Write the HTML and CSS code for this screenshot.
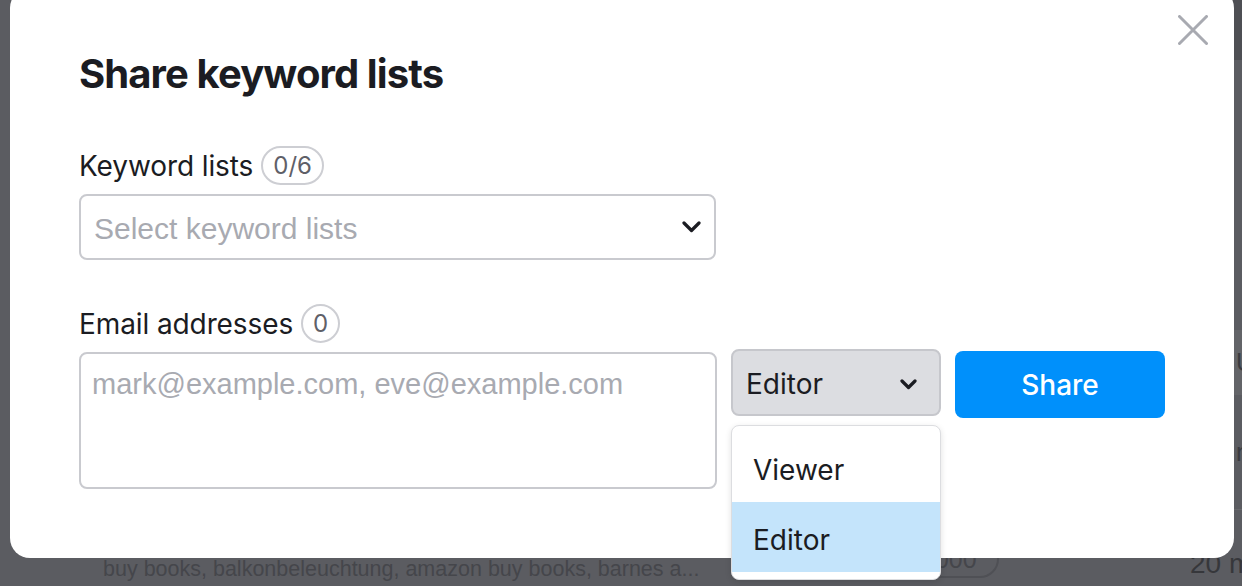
FILE: index.html
```html
<!DOCTYPE html>
<html lang="en">
<head>
<meta charset="utf-8">
<title>Share keyword lists</title>
<link rel="stylesheet" href="styles.css">
</head>
<body>
<div class="page">
  <div class="page-top"></div>
  <div class="page-gap"></div>
  <div class="page-head"><span class="edge-text">Up</span></div>
  <div class="page-row"><span class="edge-text">n</span></div>
  <div class="page-last">
    <span class="bg-keywords">buy books, balkonbeleuchtung, amazon buy books, barnes a...</span>
    <span class="bg-pill">11,000</span>
    <span class="bg-time">20 m</span>
  </div>
</div>

<div class="modal">
  <button class="close" aria-label="Close">
    <svg width="30" height="30" viewBox="0 0 30 30"><path d="M1.5 1.5 L28.5 28.5 M28.5 1.5 L1.5 28.5" stroke="#a8aab1" stroke-width="3" stroke-linecap="round" fill="none"/></svg>
  </button>
  <h1 class="title">Share keyword lists</h1>

  <div class="label-row">
    <span class="label">Keyword lists</span>
    <span class="count">0/6</span>
  </div>
  <div class="select">
    <span class="placeholder placeholder-select">Select keyword lists</span>
    <svg class="chevron" width="19" height="12" viewBox="0 0 19 12"><path d="M2 2 L9.5 9.5 L17 2" stroke="#1b1c22" stroke-width="3.2" fill="none" stroke-linecap="round" stroke-linejoin="round"/></svg>
  </div>

  <div class="label-row label-row-email">
    <span class="label">Email addresses</span>
    <span class="count">0</span>
  </div>
  <div class="email-row">
    <div class="textarea"><span class="placeholder">mark@example.com, eve@example.com</span></div>
    <div class="role">
      <div class="role-select">
        <span>Editor</span>
        <svg class="chevron" width="17" height="11" viewBox="0 0 17 11"><path d="M2 2 L8.5 8.5 L15 2" stroke="#1b1c22" stroke-width="3.2" fill="none" stroke-linecap="round" stroke-linejoin="round"/></svg>
      </div>
      <ul class="menu">
        <li>Viewer</li>
        <li class="active">Editor</li>
      </ul>
    </div>
    <button class="share">Share</button>
  </div>
</div>
</body>
</html>
```

FILE: styles.css
```css
* { box-sizing: border-box; }

body {
  margin: 0;
  width: 1242px;
  height: 586px;
  overflow: hidden;
  position: relative;
  background: #5b5c61;
  font-family: Inter, "Noto Sans", sans-serif;
  color: #1b1c22;
}

/* dimmed page behind the modal */
.page {
  display: flex;
  flex-direction: column;
  height: 586px;
}
.page-top {
  height: 60px;
  background: linear-gradient(to right, #5b5c61 1200px, #4e4f54 1200px);
}
.page-gap { height: 270px; }
.page-head {
  height: 65px;
  background: linear-gradient(to right, #5b5c61 1200px, #636468 1200px);
  display: flex;
  align-items: center;
}
.page-row {
  height: 115px;
  display: flex;
  align-items: center;
  background: linear-gradient(to top, #67686c 1px, transparent 1px) no-repeat right bottom / 42px 100%;
}
.edge-text {
  margin-left: 1236px;
  font-family: "Liberation Sans", sans-serif;
  font-size: 25px;
  color: #3a3b40;
}
.page-last {
  flex: 1;
  display: flex;
  align-items: flex-end;
  padding: 0 0 2px 103px;
  font-family: "Liberation Sans", sans-serif;
  color: #45464b;
}
.bg-keywords {
  width: 777px;
  font-size: 21.5px;
  line-height: 30px;
  white-space: nowrap;
}
.bg-pill {
  margin-bottom: 6px;
  height: 38px;
  padding: 0 20px;
  border: 2px solid #4f5055;
  border-radius: 19px;
  font-size: 25px;
  line-height: 34px;
  color: #45464b;
}
.bg-time {
  margin-left: auto;
  width: 52px;
  margin-bottom: 4px;
  font-size: 28px;
  color: #36373b;
  white-space: nowrap;
  overflow: hidden;
}

/* modal */
.modal {
  position: absolute;
  left: 10px;
  top: -12px;
  width: 1224px;
  height: 570px;
  padding: 62px 0 0 69px;
  background: #fff;
  border-radius: 20px;
}
.close {
  position: absolute;
  top: 27px;
  right: 26px;
  width: 30px;
  height: 30px;
  padding: 0;
  border: 0;
  background: none;
  display: flex;
}
.title {
  margin: 0;
  font-size: 40px;
  line-height: 48px;
  font-weight: 700;
  letter-spacing: -0.9px;
}
.label-row {
  margin-top: 48px;
  height: 39px;
  display: flex;
  align-items: center;
  gap: 8px;
}
.label-row-email { margin-top: 44px; }
.label {
  font-size: 28px;
  line-height: 34px;
  letter-spacing: -0.1px;
}
.count {
  height: 39px;
  min-width: 39px;
  padding: 0 10px;
  border: 2px solid #cdced3;
  border-radius: 20px;
  font-size: 24px;
  line-height: 35px;
  text-align: center;
  color: #5f6068;
}
.select {
  margin-top: 9px;
  width: 637px;
  height: 66px;
  border: 2px solid #c9cacf;
  border-radius: 8px;
  padding: 0 13px 0 13px;
  display: flex;
  align-items: center;
  justify-content: space-between;
}
.placeholder {
  font-family: "Liberation Sans", Arial, sans-serif;
  font-size: 29px;
  color: #a8aab1;
}
.placeholder-select {
  font-size: 30px;
  padding-top: 3px;
}
.email-row {
  margin-top: 6px;
  display: flex;
  align-items: flex-start;
  gap: 14px;
}
.textarea {
  margin-top: 3px;
  width: 638px;
  height: 137px;
  border: 2px solid #c9cacf;
  border-radius: 8px;
  padding: 14px 11px;
}
.role {
  position: relative;
  width: 210px;
}
.role-select {
  height: 67px;
  background: #dcdde1;
  border: 2px solid #c6c7cc;
  border-radius: 8px;
  padding: 3px 22px 0 13px;
  display: flex;
  align-items: center;
  justify-content: space-between;
  font-size: 28px;
}
.menu {
  position: absolute;
  top: 76px;
  left: 0;
  width: 210px;
  margin: 0;
  padding: 7px 0 7px;
  list-style: none;
  background: #fff;
  border: 1px solid #dcdde0;
  border-radius: 8px;
  box-shadow: 0 2px 6px rgba(0, 0, 0, 0.12);
}
.menu li {
  height: 69px;
  padding: 5px 0 0 21px;
  display: flex;
  align-items: center;
  font-size: 28px;
}
.menu li.active {
  height: 70px;
  background: #c4e4fb;
}
.share {
  margin-top: 2px;
  width: 210px;
  height: 67px;
  padding-top: 2px;
  border: 0;
  border-radius: 8px;
  background: #0090fb;
  color: #fff;
  font-family: Inter, sans-serif;
  font-size: 28px;
  font-weight: 500;
}
```
